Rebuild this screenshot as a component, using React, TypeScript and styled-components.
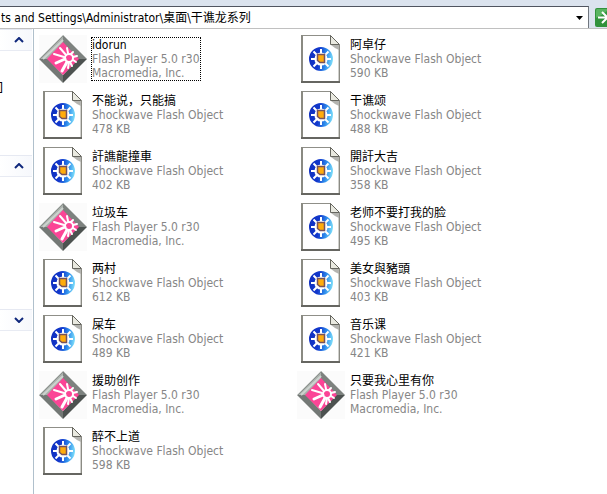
import React, { useId, useState } from 'react';
import styled, { createGlobalStyle } from 'styled-components';

const GlobalStyle = createGlobalStyle`
  * { box-sizing: border-box; }
  html, body, #root { height: 100%; }
  body {
    margin: 0;
    background: #fff;
    color: #000;
    font-family: "DejaVu Sans Condensed", "Noto Sans CJK SC", sans-serif;
    font-size: 12px;
    line-height: 14px;
  }
`;

const Explorer = styled.div`
  display: flex;
  flex-direction: column;
  min-height: 100%;
`;

const AddressBar = styled.form`
  display: flex;
  align-items: stretch;
  height: 29px;
  padding-top: 6px;
  background: #dbe3ee;
  border-bottom: 1px solid #c0c0c0;
`;

const AddressField = styled.div`
  display: flex;
  flex: 1;
  background: #fff;
  border-top: 1px solid #505560;
  border-right: 1px solid #70767e;
`;

const AddressInput = styled.input`
  flex: 1;
  min-width: 0;
  padding: 0 0 0 1px;
  border: 0;
  outline: 0;
  background: transparent;
  font: inherit;
`;

const PlainButton = styled.button`
  display: flex;
  align-items: center;
  justify-content: center;
  padding: 0;
  border: 0;
  background: transparent;
`;

const DropButton = styled(PlainButton)`
  width: 18px;
`;

const GoButton = styled(PlainButton)`
  width: 18px;
  justify-content: flex-end;
  overflow: hidden;
`;

const Body = styled.div`
  display: flex;
  flex: 1;
`;

const TaskPane = styled.aside`
  display: flex;
  flex-direction: column;
  width: 34px;
  border-right: 1px solid #b0c0cc;
`;

const TaskHeader = styled.button`
  display: flex;
  align-items: center;
  justify-content: flex-end;
  width: 32px;
  height: 22px;
  padding: 0 8px 0 0;
  border: 0;
  border-top: 1px solid #e6e9f2;
  border-bottom: 1px solid #e8ebf3;
  background: linear-gradient(to right, #fff, #f6f8fc);
`;

const TaskContent = styled.div<{ $height: number }>`
  height: ${(p) => p.$height}px;
  padding-top: 30px;
  overflow: hidden;
`;

const TaskText = styled.span`
  display: flex;
  justify-content: flex-end;
  width: 3px;
`;

const FileGrid = styled.ul`
  display: grid;
  flex: 1;
  grid-template-columns: repeat(auto-fill, 258px);
  grid-auto-rows: 48px;
  row-gap: 8px;
  align-content: start;
  margin: 0;
  padding: 6px 0 12px 5px;
  list-style: none;
`;

const FileItem = styled.li`
  display: flex;
  align-items: center;
  gap: 4px;
`;

const FileText = styled.div<{ $focused?: boolean }>`
  height: 44px;
  padding: 0;
  border: 1px dotted ${(p) => (p.$focused ? '#000' : 'transparent')};
  white-space: nowrap;
`;

const FileName = styled.div`
  height: 14px;
`;

const FileDetail = styled.div`
  height: 14px;
  color: #868686;
`;

const ShockwaveIcon = () => {
  const shade = useId();
  return (
    <svg width="48" height="48" viewBox="0 0 48 48" aria-hidden="true">
      <defs>
        <linearGradient id={shade} gradientUnits="userSpaceOnUse" x1="12" y1="22" x2="36" y2="25">
          <stop offset="0" stopColor="#1030c0" />
          <stop offset="0.400" stopColor="#1238cc" />
          <stop offset="0.700" stopColor="#2e8cec" />
          <stop offset="1" stopColor="#80e0fa" />
        </linearGradient>
      </defs>
      <path d="M4 0H34L43 9V48H4Z" fill="#fff" />
      <path d="M4 0H34V1H4Z" fill="#8f8f88" />
      <path d="M4 0H6V47H4Z" fill="#8a8a82" />
      <path d="M41 13H42V46H41Z" fill="#d0d0cc" />
      <path d="M42 10H43V48H42Z" fill="#8b8b84" />
      <path d="M4 46H43V48H4Z" fill="#666661" />
      <path d="M34 10H42V15L38 13Z" fill="#b4b4b0" />
      <path d="M33.500 .5V9.500H42.500Z" fill="#e9e9e0" stroke="#66665f" />
      <circle cx="24" cy="24" r="9.300" fill="none" stroke={`url(#${shade})`} strokeWidth="5.400" />
      <path
        d="M24 18V14M24 30V34M18 24H14M30 24H34M20 20L16.500 16.500M28 20L31.500 16.500M20 28L16.500 31.500M28 28L31.500 31.500"
        stroke="#fff"
        strokeWidth="2"
      />
      <path d="M20.500 19.500H27.500V27.500H23L20.500 25.500Z" fill="#ffac0c" stroke="#76525c" strokeWidth="1.500" />
    </svg>
  );
};

const PlayerIcon = () => (
  <svg width="48" height="48" viewBox="0 0 48 48" aria-hidden="true">
    <path d="M0 0H48V48H0Z" fill="#fbfbfb" />
    <path d="M24 0L0 24L9 24L24 8Z" fill="#a9b0ab" />
    <path d="M24 0L48 24H39L24 8Z" fill="#7d827f" />
    <path d="M0 24L24 48V40L9 24Z" fill="#737875" />
    <path d="M48 24L24 48V40L39 24Z" fill="#4d5250" />
    <path d="M24 1L1 24" stroke="#8c918e" fill="none" />
    <path d="M24 5L4 24" stroke="#cdd3cf" strokeWidth="2" fill="none" />
    <path d="M24 7L40 24L24 40L8 24Z" fill="#fb4596" />
    <g stroke="#fff" fill="none" strokeLinecap="round">
      <circle cx="30" cy="23" r="4" strokeWidth="2" />
      <path d="M27 20L21 13M25 22L15 19M29 18L28 13M32 19L34 17M34 22L38 21M34 25L37 27M31 27L33 31" strokeWidth="2" />
      <path d="M26 24L17 28M28 27L23 36" strokeWidth="3" />
      <path d="M30 27L29 33" strokeWidth="2" />
    </g>
  </svg>
);

const Chevron = ({ down }: { down?: boolean }) => (
  <svg width="10" height="6" viewBox="0 0 10 6" aria-hidden="true">
    <path d={down ? 'M1 1L5 5L9 1' : 'M1 5L5 1L9 5'} fill="none" stroke="#10287c" strokeWidth="2" />
  </svg>
);

const DropArrow = () => (
  <svg width="7" height="4" viewBox="0 0 7 4" aria-hidden="true">
    <path d="M0 0H7L3.500 4Z" fill="#000" />
  </svg>
);

const GoIcon = () => (
  <svg width="12" height="19" viewBox="0 0 12 19" aria-hidden="true">
    <path d="M12 0H2Q0 0 0 2V17Q0 19 2 19H12Z" fill="#32923c" />
    <path d="M12 1H2Q1 1 1 3V10Q6 8 12 3Z" fill="#59b460" />
    <path d="M3 9.500H12M7 4L12.500 9.500L7 15" fill="none" stroke="#fff" strokeWidth="2" />
  </svg>
);

type Kind = 'player' | 'shockwave';
type Entry = { name: string; kind: Kind; size?: string };

const files: Entry[] = [
  { name: 'idorun', kind: 'player' },
  { name: '阿卓仔', kind: 'shockwave', size: '590 KB' },
  { name: '不能说，只能搞', kind: 'shockwave', size: '478 KB' },
  { name: '干谯颂', kind: 'shockwave', size: '488 KB' },
  { name: '訐譙龍撞車', kind: 'shockwave', size: '402 KB' },
  { name: '開訐大吉', kind: 'shockwave', size: '358 KB' },
  { name: '垃圾车', kind: 'player' },
  { name: '老师不要打我的脸', kind: 'shockwave', size: '495 KB' },
  { name: '两村', kind: 'shockwave', size: '612 KB' },
  { name: '美女與豬頭', kind: 'shockwave', size: '403 KB' },
  { name: '屎车', kind: 'shockwave', size: '489 KB' },
  { name: '音乐课', kind: 'shockwave', size: '421 KB' },
  { name: '援助创作', kind: 'player' },
  { name: '只要我心里有你', kind: 'player' },
  { name: '醉不上道', kind: 'shockwave', size: '598 KB' },
];

export default function App() {
  const [path, setPath] = useState('ts and Settings\\Administrator\\桌面\\干谯龙系列');

  return (
    <Explorer>
      <GlobalStyle />
      <AddressBar onSubmit={(e) => e.preventDefault()}>
        <AddressField>
          <AddressInput aria-label="Address" value={path} onChange={(e) => setPath(e.target.value)} />
          <DropButton type="button" aria-label="Show addresses">
            <DropArrow />
          </DropButton>
        </AddressField>
        <GoButton type="submit" aria-label="Go">
          <GoIcon />
        </GoButton>
      </AddressBar>
      <Body>
        <TaskPane>
          <TaskHeader type="button" aria-label="Collapse tasks">
            <Chevron />
          </TaskHeader>
          <TaskContent $height={104}>
            <TaskText>]</TaskText>
          </TaskContent>
          <TaskHeader type="button" aria-label="Collapse places">
            <Chevron />
          </TaskHeader>
          <TaskContent $height={132} />
          <TaskHeader type="button" aria-label="Expand details">
            <Chevron down />
          </TaskHeader>
        </TaskPane>
        <FileGrid>
          {files.map((file, i) => (
            <FileItem key={file.name}>
              {file.kind === 'player' ? <PlayerIcon /> : <ShockwaveIcon />}
              <FileText $focused={i === 0}>
                <FileName>{file.name}</FileName>
                <FileDetail>{file.kind === 'player' ? 'Flash Player 5.0 r30' : 'Shockwave Flash Object'}</FileDetail>
                <FileDetail>{file.kind === 'player' ? 'Macromedia, Inc.' : file.size}</FileDetail>
              </FileText>
            </FileItem>
          ))}
        </FileGrid>
      </Body>
    </Explorer>
  );
}
